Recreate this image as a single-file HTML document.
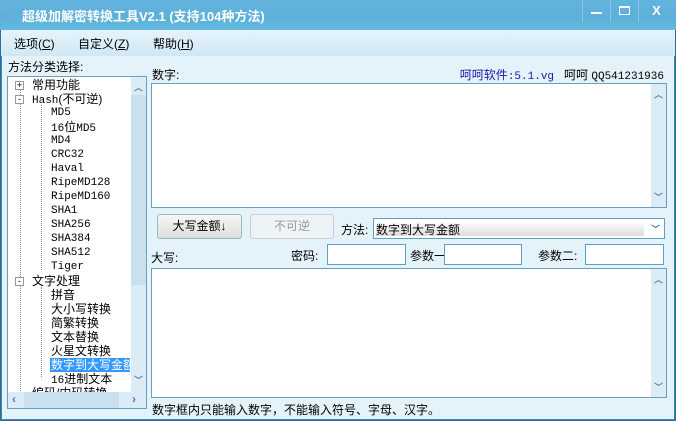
<!DOCTYPE html>
<html><head><meta charset="utf-8"><style>
*{margin:0;padding:0;box-sizing:border-box}
body{width:676px;height:421px;overflow:hidden;font:12px "Liberation Sans","Noto Sans CJK SC",sans-serif;color:#000;background:#2b6f98;position:relative}
.a{position:absolute}
#win{left:1px;top:0;width:674px;height:420px;background:#e4f2fa;border:1px solid #3f86b3;border-top:none}
#title{left:0;top:0;width:676px;height:30px;background:linear-gradient(#62b4de,#5cb0da 60%,#62bade);}
#menu{left:1px;top:30px;width:674px;height:26px;background:linear-gradient(#e6f4fb,#cfe8f5)}
.tb{top:0;height:22px;width:28px;border-left:1px solid #8cc4e3;color:#fff;text-align:center}
.box{background:#fff;border:1px solid #6a9fc0}
.sb{background:#dbecf6}
.tree div{position:absolute;white-space:nowrap;font-size:12px;line-height:14px}
.m,.tree .m{font-family:"Liberation Mono","Noto Sans CJK SC",monospace;font-size:11px}
.inp{background:#fff;border:1px solid #5f9ec6;height:21px}
.btn{border:1px solid #9bb;border-radius:3px;background:linear-gradient(#f6f6f6,#dedede);text-align:center;line-height:23px;height:25px}
.dot{border-left:1px dotted #888}
.ar{color:#57a;font-size:9px;font-weight:bold}
</style></head><body>
<div id="win" class="a"></div>
<div id="title" class="a">
 <div class="a" style="left:5px;top:9px;width:16px;height:12px;font-size:5px;color:#8ad;line-height:6px">5vip<br>&nbsp;soft</div>
 <div class="a" style="left:22px;top:6px;color:#fff;font-weight:bold;font-size:13px">超级加解密转换工具V2.1 (支持104种方法)</div>
 <div class="a tb" style="left:582px;width:28px"><div class="a" style="left:8px;top:12px;width:11px;height:2px;background:#fff"></div></div>
 <div class="a tb" style="left:610px;width:28px"><div class="a" style="left:8px;top:6px;width:11px;height:9px;border:1px solid #fff;border-top-width:2px"></div></div>
 <div class="a tb" style="left:638px;width:36px;font-weight:bold;font-size:13px;line-height:22px">X</div>
</div>
<div id="menu" class="a">
 <span class="a" style="left:13px;top:5px">选项(<u>C</u>)</span>
 <span class="a" style="left:77px;top:5px">自定义(<u>Z</u>)</span>
 <span class="a" style="left:152px;top:5px">帮助(<u>H</u>)</span>
</div>
<div class="a" style="left:8px;top:58px">方法分类选择:</div>
<div class="a box" style="left:7px;top:76px;width:140px;height:333px;overflow:hidden">
 <div class="tree">
  <div class="a dot" style="left:12px;top:6px;height:310px"></div>
  <div class="a dot" style="left:33px;top:28px;height:165px"></div>
  <div class="a dot" style="left:33px;top:210px;height:90px"></div>
  <div style="left:7px;top:4px;width:9px;height:9px;border:1px solid #999;background:#fff;font-size:9px;line-height:7px;text-align:center">+</div>
  <div style="left:7px;top:18px;width:9px;height:9px;border:1px solid #999;background:#fff;font-size:9px;line-height:6px;text-align:center">-</div>
  <div style="left:7px;top:200px;width:9px;height:9px;border:1px solid #999;background:#fff;font-size:9px;line-height:6px;text-align:center">-</div>
  <div style="left:24px;top:1px">常用功能</div>
  <div style="left:24px;top:15px"><span class="m">Hash</span>(不可逆)</div>
  <div class="m" style="left:43px;top:29px">MD5</div>
  <div style="left:43px;top:43px"><span class="m">16</span>位<span class="m">MD5</span></div>
  <div class="m" style="left:43px;top:57px">MD4</div>
  <div class="m" style="left:43px;top:71px">CRC32</div>
  <div class="m" style="left:43px;top:85px">Haval</div>
  <div class="m" style="left:43px;top:99px">RipeMD128</div>
  <div class="m" style="left:43px;top:113px">RipeMD160</div>
  <div class="m" style="left:43px;top:127px">SHA1</div>
  <div class="m" style="left:43px;top:141px">SHA256</div>
  <div class="m" style="left:43px;top:155px">SHA384</div>
  <div class="m" style="left:43px;top:169px">SHA512</div>
  <div class="m" style="left:43px;top:183px">Tiger</div>
  <div style="left:24px;top:197px">文字处理</div>
  <div style="left:43px;top:211px">拼音</div>
  <div style="left:43px;top:225px">大小写转换</div>
  <div style="left:43px;top:239px">简繁转换</div>
  <div style="left:43px;top:253px">文本替换</div>
  <div style="left:43px;top:267px">火星文转换</div>
  <div style="left:42px;top:281px;background:#3399ff;color:#fff;width:80px;overflow:hidden;padding-left:1px">数字到大写金额</div>
  <div style="left:43px;top:295px"><span class="m">16</span>进制文本</div>
  <div style="left:24px;top:309px">编码/内码转换</div>
 </div>
 <div class="a sb" style="left:123px;top:0;width:15px;height:315px"><div class="a ar" style="left:3px;top:4px">︿</div><div class="a" style="left:0;top:18px;width:15px;height:190px;background:#c9e1ef"></div><div class="a ar" style="left:3px;top:296px">﹀</div></div>
 <div class="a sb" style="left:0;top:315px;width:138px;height:16px"><div class="a" style="left:4px;top:0;color:#57a;font-weight:bold">‹</div><div class="a" style="left:16px;top:0;width:95px;height:16px;background:#c9e1ef"></div><div class="a" style="left:124px;top:0;color:#57a;font-weight:bold">›</div></div>
</div>
<div class="a" style="left:152px;top:66px">数字:</div>
<div class="a" style="right:12px;top:66px;white-space:nowrap"><span style="color:#1a1aa8">呵呵软件<span class="m">:5.1.vg</span></span>&nbsp;&nbsp; 呵呵 <span class="m">QQ541231936</span></div>
<div class="a box" style="left:151px;top:83px;width:516px;height:125px"><div class="a sb" style="right:0;top:0;width:15px;height:123px"><div class="a ar" style="left:3px;top:4px">︿</div><div class="a ar" style="left:3px;top:106px">﹀</div></div></div>
<div class="a btn" style="left:157px;top:214px;width:85px">大写金额↓</div>
<div class="a btn" style="left:250px;top:214px;width:84px;color:#999;border-color:#ccd;background:#eef3f6">不可逆</div>
<div class="a" style="left:341px;top:221px">方法:</div>
<div class="a inp" style="left:373px;top:218px;width:292px;height:21px"><div class="a" style="left:2px;top:2px;width:268px;height:15px;background:linear-gradient(#fff,#ddd)">数字到大写金额</div><div class="a ar" style="left:277px;top:3px;color:#36a">﹀</div></div>
<div class="a" style="left:151px;top:249px">大写:</div>
<div class="a" style="left:291px;top:247px">密码:</div>
<div class="a inp" style="left:327px;top:244px;width:79px"></div>
<div class="a" style="left:410px;top:247px">参数一:</div>
<div class="a inp" style="left:444px;top:244px;width:78px"></div>
<div class="a" style="left:538px;top:247px">参数二:</div>
<div class="a inp" style="left:585px;top:244px;width:79px"></div>
<div class="a box" style="left:151px;top:268px;width:516px;height:130px"><div class="a sb" style="right:0;top:0;width:15px;height:128px"><div class="a ar" style="left:3px;top:4px">︿</div><div class="a ar" style="left:3px;top:111px">﹀</div></div></div>
<div class="a" style="left:152px;top:401px">数字框内只能输入数字，不能输入符号、字母、汉字。</div>
</body></html>
